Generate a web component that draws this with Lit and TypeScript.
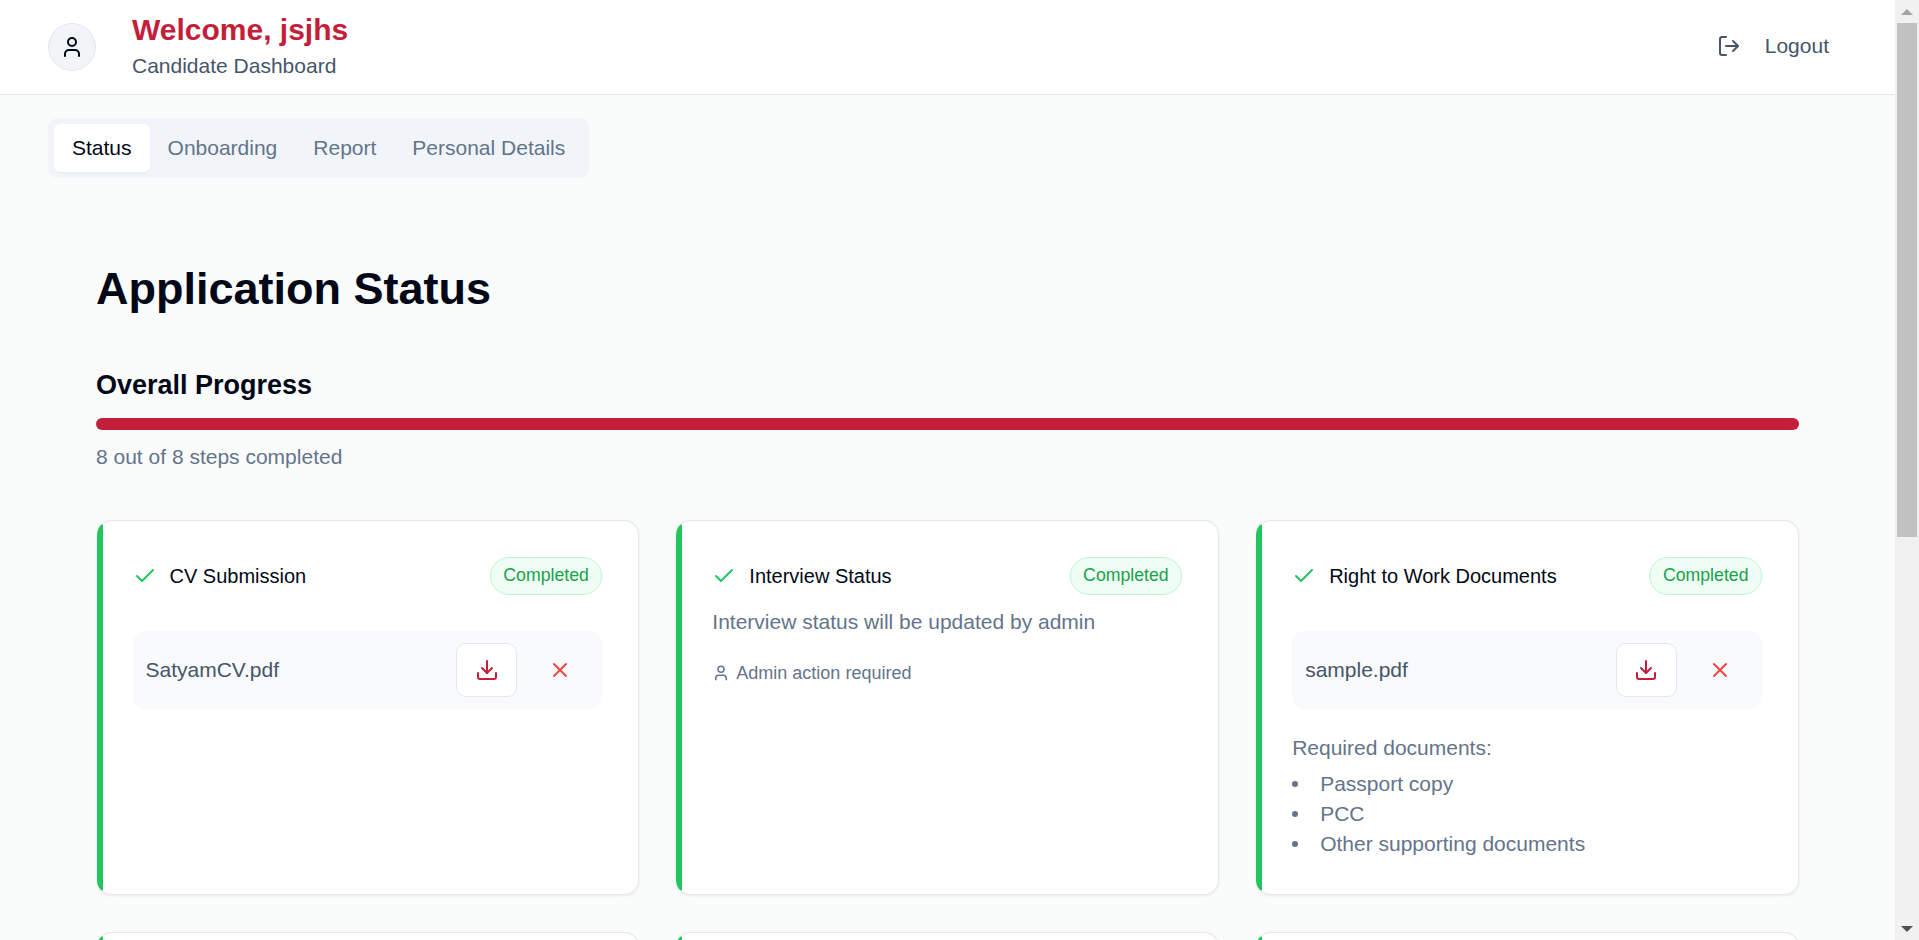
import { LitElement, html, css, svg } from "lit";
import { customElement } from "lit/decorators.js";

const icon = (cls: string, body: unknown) => html`<svg class=${cls} viewBox="0 0 24 24" fill="none" stroke="currentColor" stroke-width="2" stroke-linecap="round" stroke-linejoin="round">${body}</svg>`;
const user = svg`<path d="M19 21v-2a4 4 0 0 0-4-4H9a4 4 0 0 0-4 4v2"/><circle cx="12" cy="7" r="4"/>`;
const logout = svg`<path d="M9 21H5a2 2 0 0 1-2-2V5a2 2 0 0 1 2-2h4"/><polyline points="16 17 21 12 16 7"/><line x1="21" y1="12" x2="9" y2="12"/>`;
const check = svg`<path d="M20 6 9 17l-5-5"/>`;
const download = svg`<path d="M21 15v4a2 2 0 0 1-2 2H5a2 2 0 0 1-2-2v-4"/><polyline points="7 10 12 15 17 10"/><line x1="12" y1="15" x2="12" y2="3"/>`;
const x = svg`<path d="M18 6 6 18"/><path d="m6 6 12 12"/>`;

@customElement("app-root")
export class AppRoot extends LitElement {
  static styles = css`
    :host { display: block; font-family: "Liberation Sans", Arial, sans-serif; }
    * { box-sizing: border-box; }
    .page { height: 100vh; display: flex; overflow: hidden; background: #fafbfb; color: #020817; }
    .content { flex: 1; min-width: 0; overflow: hidden; }

    .scrollbar { flex: 0 0 24px; display: flex; flex-direction: column; background: #f1f1f1; }
    .sb-btn { height: 23px; display: flex; align-items: center; justify-content: center; }
    .sb-up { width: 0; height: 0; border-left: 6px solid transparent; border-right: 6px solid transparent; border-bottom: 6px solid #a3a3a3; }
    .sb-down { width: 0; height: 0; border-left: 6px solid transparent; border-right: 6px solid transparent; border-top: 6px solid #505050; }
    .sb-track { flex: 1; padding: 0 2px; }
    .sb-thumb { height: 514px; background: #c1c1c1; }

    header { height: 95px; background: #fff; border-bottom: 1px solid #e5e7eb; display: flex; align-items: center; justify-content: space-between; padding: 0 48px; }
    .who { display: flex; align-items: center; gap: 36px; }
    .avatar { width: 48px; height: 48px; border-radius: 50%; background: #f1f5f9; border: 1px solid #e2e8f0; color: #020817; display: flex; align-items: center; justify-content: center; }
    .i-avatar { width: 24px; height: 24px; }
    h2.welcome { margin: -2px 0 0; font-size: 30px; line-height: 36px; font-weight: 700; color: #c41e3a; }
    .sub { font-size: 21px; line-height: 28px; color: #475569; margin-top: 4px; }
    .logout { display: flex; align-items: center; gap: 24px; padding: 0 18px 2px 0; font-size: 21px; color: #475569; }
    .i-logout { width: 24px; height: 24px; }

    .tabs { display: inline-flex; margin: 23px 0 0 48px; padding: 6px; background: #f1f5f9; border-radius: 10px; }
    .tab { padding: 0 18px; height: 48px; line-height: 48px; font-size: 21px; color: #64748b; border-radius: 6px; }
    .tab.active { background: #fff; color: #020817; box-shadow: 0 1px 2px rgba(0,0,0,.05); }

    main { padding: 86px 96px 36px; }
    h1 { margin: 0; font-size: 45px; line-height: 50px; font-weight: 700; color: #020817; }
    .progress-title { margin: 55px 0 0; font-size: 27px; line-height: 32px; font-weight: 700; color: #020817; }
    .bar { height: 12px; margin-top: 17px; border-radius: 6px; background: #c41e3a; }
    .steps { margin-top: 13px; font-size: 21px; line-height: 28px; color: #64748b; }

    .grid { display: grid; grid-template-columns: repeat(3, 1fr); gap: 37px; margin: 49px 0 0 .5px; }
    .card { background: linear-gradient(90deg, #22c55e 6px, #fff 6px) border-box; border: 1px solid #e2e8f0; border-left-color: transparent; border-radius: 15px; padding: 36px 36px 35px 35px; min-height: 375px; box-shadow: 0 1px 3px rgba(0,0,0,.08); }
    .card.blank { min-height: 300px; }
    .head { display: flex; align-items: center; justify-content: space-between; height: 38px; }
    .title { display: flex; align-items: center; gap: 13px; font-size: 20px; color: #020817; }
    .i-check { width: 24px; height: 24px; color: #22c55e; }
    .badge { height: 38px; padding: 0 12.5px; line-height: 35px; font-size: 17.7px; color: #16a34a; background: #f0fdf4; border: 1px solid #bbf7d0; border-radius: 19px; }
    .file { display: flex; align-items: center; justify-content: space-between; height: 78px; margin-top: 36px; padding: 12px 11px 12px 13px; border-radius: 12px; background: #f8fafc; font-size: 21px; color: #475569; }
    .actions { display: flex; gap: 12px; }
    .btn { width: 62px; height: 54px; border-radius: 10px; display: flex; align-items: center; justify-content: center; }
    .btn.dl { width: 61px; background: #fff; border: 1px solid #e2e8f0; color: #c41e3a; }
    .btn.rm { color: #ef4444; }
    .i-btn { width: 24px; height: 24px; }
    .desc { margin-top: 12px; font-size: 21px; line-height: 30px; color: #64748b; }
    .note { display: flex; align-items: center; gap: 6px; margin-top: 23px; font-size: 18px; line-height: 26px; color: #64748b; }
    .i-note { width: 18px; height: 18px; }
    .req { margin-top: 24px; font-size: 21px; line-height: 30px; color: #64748b; }
    ul { list-style: none; margin: 6px 0 0; padding: 0; font-size: 21px; line-height: 30px; color: #64748b; }
    li { display: flex; align-items: center; gap: 22px; }
    li::before { content: ""; width: 6px; height: 6px; border-radius: 50%; background: #64748b; }
  `;

  private head(title: string) {
    return html`<div class="head">
      <div class="title">${icon("i-check", check)}<span>${title}</span></div>
      <span class="badge">Completed</span>
    </div>`;
  }

  private file(name: string) {
    return html`<div class="file">
      <span>${name}</span>
      <div class="actions">
        <div class="btn dl">${icon("i-btn", download)}</div>
        <div class="btn rm">${icon("i-btn", x)}</div>
      </div>
    </div>`;
  }

  render() {
    return html`<div class="page">
      <div class="content">
        <header>
          <div class="who">
            <div class="avatar">${icon("i-avatar", user)}</div>
            <div>
              <h2 class="welcome">Welcome, jsjhs</h2>
              <div class="sub">Candidate Dashboard</div>
            </div>
          </div>
          <div class="logout">${icon("i-logout", logout)}<span>Logout</span></div>
        </header>
        <nav class="tabs">
          <div class="tab active">Status</div>
          <div class="tab">Onboarding</div>
          <div class="tab">Report</div>
          <div class="tab">Personal Details</div>
        </nav>
        <main>
          <h1>Application Status</h1>
          <h3 class="progress-title">Overall Progress</h3>
          <div class="bar"></div>
          <div class="steps">8 out of 8 steps completed</div>
          <div class="grid">
            <section class="card">${this.head("CV Submission")}${this.file("SatyamCV.pdf")}</section>
            <section class="card">
              ${this.head("Interview Status")}
              <div class="desc">Interview status will be updated by admin</div>
              <div class="note">${icon("i-note", user)}<span>Admin action required</span></div>
            </section>
            <section class="card">
              ${this.head("Right to Work Documents")}
              ${this.file("sample.pdf")}
              <div class="req">Required documents:</div>
              <ul><li>Passport copy</li><li>PCC</li><li>Other supporting documents</li></ul>
            </section>
            <section class="card blank"></section>
            <section class="card blank"></section>
            <section class="card blank"></section>
          </div>
        </main>
      </div>
      <div class="scrollbar" aria-hidden="true">
        <div class="sb-btn"><div class="sb-up"></div></div>
        <div class="sb-track"><div class="sb-thumb"></div></div>
        <div class="sb-btn"><div class="sb-down"></div></div>
      </div>
    </div>`;
  }
}
